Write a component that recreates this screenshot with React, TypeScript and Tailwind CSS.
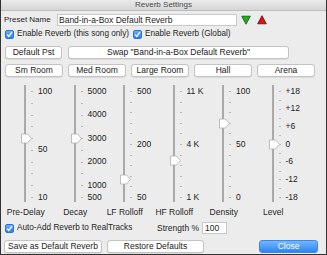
import React from 'react';

type Slider = {
  name: string;
  ticks: number;
  labels: Record<number, string>;
  value: number;
};

const sliders: Slider[] = [
  { name: 'Pre-Delay', ticks: 10, labels: { 0: '100', 5: '50', 9: '10' }, value: 0.445 },
  { name: 'Decay', ticks: 10, labels: { 0: '5000', 2: '4000', 4: '3000', 6: '2000', 8: '1000', 9: '500' }, value: 0.445 },
  { name: 'LF Rolloff', ticks: 11, labels: { 0: '500', 5: '200', 10: '50' }, value: 0.83 },
  { name: 'HF Rolloff', ticks: 11, labels: { 0: '11 K', 5: '4 K', 10: '1 K' }, value: 0.65 },
  { name: 'Density', ticks: 11, labels: { 0: '100', 5: '50', 10: '0' }, value: 0.3 },
  { name: 'Level', ticks: 13, labels: { 0: '+18', 2: '+12', 4: '+6', 6: '0', 8: '-6', 10: '-12', 12: '-18' }, value: 0.5 },
];

function CheckBox() {
  return (
    <span className="flex h-[9px] w-[9px] shrink-0 items-center justify-center rounded-[2px] bg-gradient-to-b from-[#6aaefc] to-[#2f7ff3] border border-[#2d72d6]">
      <svg width="7" height="7" viewBox="0 0 7 7">
        <path d="M1 3.6 L2.8 5.4 L6 1.2" fill="none" stroke="#fff" strokeWidth="1.3" />
      </svg>
    </span>
  );
}

function Btn({ children, className = '' }: { children: React.ReactNode; className?: string }) {
  return (
    <div
      className={`flex items-center justify-center whitespace-nowrap rounded-[3px] border border-[#c4c4c4] bg-white text-[8.5px] text-[#222] shadow-[0_0.5px_0.5px_rgba(0,0,0,0.15)] ${className}`}
    >
      {children}
    </div>
  );
}

function SliderColumn({ s }: { s: Slider }) {
  const top = 6;
  const span = 106;
  const items = Array.from({ length: s.ticks }, (_, i) => i);
  return (
    <div className="relative h-[117px] w-[49.5px] shrink-0">
      <div className="absolute left-[23px] top-0 bottom-0 w-[2px] bg-[#a9a9a9]" />
      {items.map((i) => {
        const y = top + (span * i) / (s.ticks - 1);
        const label = s.labels[i];
        return (
          <React.Fragment key={i}>
            <div className="absolute left-[30px] h-[1px] w-[2px] bg-[#b5b5b5]" style={{ top: y }} />
            {label && (
              <div
                className="absolute left-[37px] whitespace-nowrap text-[8.5px] leading-none text-[#222]"
                style={{ top: y - 4.5 }}
              >
                {label}
              </div>
            )}
          </React.Fragment>
        );
      })}
      <svg
        className="absolute left-[19px]"
        style={{ top: top + span * s.value - 5 }}
        width="13"
        height="11"
        viewBox="0 0 13 11"
      >
        <path d="M1.5 1 H7.5 L11.5 5.5 L7.5 10 H1.5 Z" fill="#fff" stroke="#b0b0b0" strokeWidth="0.8" />
      </svg>
    </div>
  );
}

export default function App() {
  return (
    <div className="flex h-[255px] w-[327px] flex-col border-x border-b border-[#333] bg-[#ececec] font-['Liberation_Sans',Arial,sans-serif] text-[#1e1e1e]">
      <div className="flex h-[11px] shrink-0 items-center justify-center border-b border-[#bdbdbd] bg-gradient-to-b from-[#ebebeb] to-[#d6d6d6] text-[8px] leading-none text-[#4a4a4a]">
        Reverb Settings
      </div>

      <div className="mt-[3px] flex h-[12px] items-center">
        <span className="ml-[3px] w-[53px] whitespace-nowrap text-[8px]">Preset Name</span>
        <div className="flex h-[12px] w-[180px] items-center border border-[#c9c9c9] bg-white pl-[1px] text-[8.5px]">
          Band-in-a-Box Default Reverb
        </div>
        <svg className="ml-[4px]" width="10" height="10" viewBox="0 0 10 10">
          <path d="M0.7 1.2 H9.3 L5 9.3 Z" fill="#1fae1f" stroke="#0b5a0b" strokeWidth="0.8" />
        </svg>
        <svg className="ml-[6px]" width="10" height="10" viewBox="0 0 10 10">
          <path d="M0.7 8.8 H9.3 L5 0.7 Z" fill="#d81414" stroke="#6a0606" strokeWidth="0.8" />
        </svg>
      </div>

      <div className="mt-[3px] flex h-[10px] items-center whitespace-nowrap text-[8.2px]">
        <span className="ml-[4px]">
          <CheckBox />
        </span>
        <span className="ml-[3px] w-[116px]">Enable Reverb (this song only)</span>
        <CheckBox />
        <span className="ml-[3px]">Enable Reverb (Global)</span>
      </div>

      <div className="mt-[7px] flex h-[13px] gap-[6px] pl-[4px]">
        <Btn className="w-[57px]">Default Pst</Btn>
        <Btn className="w-[221px]">Swap "Band-in-a-Box Default Reverb"</Btn>
      </div>

      <div className="mt-[5px] flex h-[13px] gap-[5px] pl-[4px]">
        <Btn className="w-[58px]">Sm Room</Btn>
        <Btn className="w-[58px]">Med Room</Btn>
        <Btn className="w-[58px]">Large Room</Btn>
        <Btn className="w-[58px]">Hall</Btn>
        <Btn className="w-[58px]">Arena</Btn>
      </div>

      <div className="mt-[8px] flex">
        {sliders.map((s) => (
          <SliderColumn key={s.name} s={s} />
        ))}
      </div>

      <div className="mt-[5px] flex h-[10px] items-center">
        {sliders.map((s) => (
          <div key={s.name} className="w-[49.5px] shrink-0 whitespace-nowrap text-center text-[8.5px] leading-none">
            {s.name}
          </div>
        ))}
      </div>

      <div className="mt-[5px] flex h-[12px] items-center whitespace-nowrap text-[8.2px]">
        <span className="ml-[4px]">
          <CheckBox />
        </span>
        <span className="ml-[3px] w-[140px]">Auto-Add Reverb to RealTracks</span>
        <span className="w-[45px] text-[8.5px]">Strength %</span>
        <div className="flex h-[12px] w-[25px] items-center border border-[#c9c9c9] bg-white pl-[2px] text-[8.5px]">
          100
        </div>
      </div>

      <div className="mt-[6px] flex h-[13px] pl-[3px]">
        <Btn className="w-[98px]">Save as Default Reverb</Btn>
        <Btn className="ml-[5px] w-[97px]">Restore Defaults</Btn>
        <div className="ml-[55px] flex w-[59px] items-center justify-center rounded-[3px] border border-[#3f86e8] bg-gradient-to-b from-[#74b6fb] to-[#2a84f6] text-[8.5px] text-white">
          Close
        </div>
      </div>
    </div>
  );
}
